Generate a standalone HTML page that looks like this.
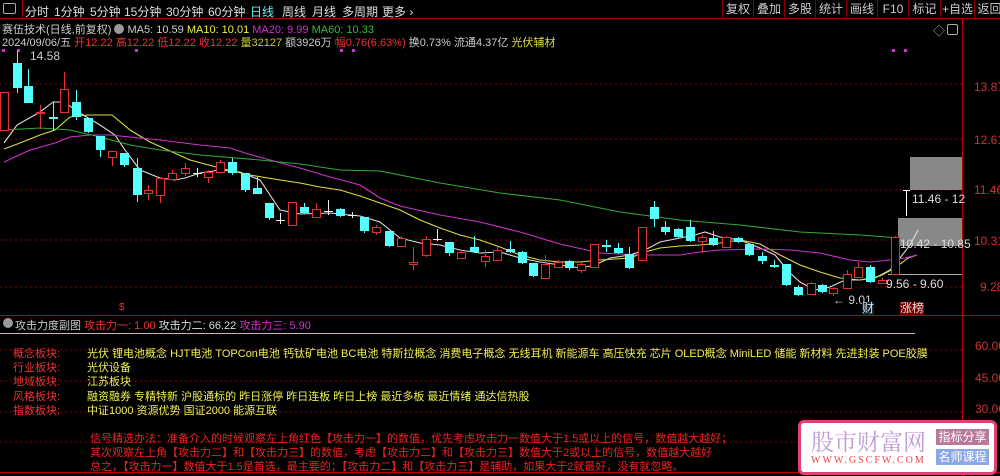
<!DOCTYPE html>
<html><head><meta charset="utf-8"><style>
*{margin:0;padding:0;box-sizing:border-box}
body{width:1000px;height:476px;background:#000;overflow:hidden;position:relative;font-family:"Liberation Sans","Noto Sans CJK SC",sans-serif;font-size:11px;color:#ccc}
.a{position:absolute;white-space:nowrap}
.btn{position:absolute;top:0;height:19px;border-left:1px solid #800;color:#ccc;font-size:12px;line-height:19px;text-align:center}
.tb{position:absolute;top:3px;font-size:12px;color:#ddd}
</style></head><body>
<div class="a" style="left:0;top:0;width:1000px;height:19px;border-bottom:1px solid #a00"></div>
<div class="a" style="left:3px;top:3px;width:13px;height:11px;border:1px solid #aaa;border-radius:2px"></div>
<div class="a" style="left:22px;top:0;height:19px;border-left:1px solid #a00"></div>
<span class="tb" style="left:25px">分时</span>
<span class="tb" style="left:54px">1分钟</span>
<span class="tb" style="left:90px">5分钟</span>
<span class="tb" style="left:124px">15分钟</span>
<span class="tb" style="left:166px">30分钟</span>
<span class="tb" style="left:208px">60分钟</span>
<span class="tb" style="left:250px;color:#6ee">日线</span>
<span class="tb" style="left:282px">周线</span>
<span class="tb" style="left:312px">月线</span>
<span class="tb" style="left:342px">多周期</span>
<span class="tb" style="left:382px">更多 ›</span>
<div class="btn" style="left:722px;width:31px">复权</div>
<div class="btn" style="left:753px;width:31px">叠加</div>
<div class="btn" style="left:784px;width:31px">多股</div>
<div class="btn" style="left:815px;width:31px">统计</div>
<div class="btn" style="left:846px;width:31px">画线</div>
<div class="btn" style="left:877px;width:31px">F10</div>
<div class="btn" style="left:908px;width:32px">标记</div>
<div class="btn" style="left:940px;width:34px">+自选</div>
<div class="btn" style="left:974px;width:30px">返回</div>
<div class="a" style="left:2px;top:21px;font-size:11px;color:#ccc">赛伍技术(日线,前复权) <span style="display:inline-block;width:10px;height:10px;border-radius:5px;background:#999;vertical-align:-1px"></span> MA5: 10.59 <span style="color:#ee4">MA10: 10.01</span> <span style="color:#c3c">MA20: 9.99</span> <span style="color:#3b3">MA60: 10.33</span></div>
<div class="a" style="left:2px;top:34px;font-size:11px;color:#ccc">2024/09/06/五 <span style="color:#e33">开12.22 高12.22 低12.22 收12.22</span> <span style="color:#cc3">量32127</span> 额3926万 <span style="color:#e33">幅0.76(6.63%)</span> 换0.73% 流通4.37亿 <span style="color:#dd4">光伏辅材</span></div>
<div class="a" style="left:933px;top:22px;font-size:12px;color:#aaa">◇</div>
<div class="a" style="left:947px;top:24px;width:11px;height:11px;border:1px solid #aaa;border-radius:2px"></div>

<svg class="a" style="left:0;top:0" width="1000" height="476">
<g stroke="#800" stroke-dasharray="2,3" stroke-width="1">
<line x1="0" y1="84" x2="962" y2="84"/><line x1="0" y1="139" x2="962" y2="139"/><line x1="0" y1="190" x2="962" y2="190"/><line x1="0" y1="240" x2="962" y2="240"/><line x1="0" y1="287" x2="962" y2="287"/>
<line x1="0" y1="350" x2="962" y2="350"/><line x1="0" y1="381" x2="962" y2="381"/><line x1="0" y1="412" x2="962" y2="412"/><line x1="0" y1="442" x2="962" y2="442"/>
</g>
<line x1="962.5" y1="19" x2="962.5" y2="476" stroke="#b00"/>
<line x1="0" y1="315.5" x2="1000" y2="315.5" stroke="#b00"/>
<line x1="0" y1="333.5" x2="915" y2="333.5" stroke="#cc3"/>
<line x1="0" y1="472.5" x2="1000" y2="472.5" stroke="#b00"/>
<g fill="#c3c"><rect x="2" y="49" width="3" height="3"/><rect x="17" y="49" width="3" height="3"/><rect x="135" y="49" width="3" height="3"/><rect x="340" y="49" width="3" height="3"/><rect x="352" y="49" width="3" height="3"/><rect x="892" y="49" width="3" height="3"/><rect x="904" y="49" width="3" height="3"/></g>
<rect x="910" y="157" width="52" height="33" fill="#888"/>
<rect x="898" y="218" width="64" height="28" fill="#888"/>
<line x1="888" y1="274.5" x2="962" y2="274.5" stroke="#aaa"/>
<line x1="906.5" y1="190" x2="906.5" y2="216" stroke="#fff"/><line x1="903" y1="190.5" x2="910" y2="190.5" stroke="#fff"/>
<g id="ma" fill="none" stroke-width="1.1"></g>
<g id="cd"></g>
</svg>
<div class="a" style="left:30px;top:49px;color:#ccc;font-size:12px">14.58</div>
<div class="a" style="left:912px;top:192px;color:#ddd;font-size:12px">11.46 - 12</div>
<div class="a" style="left:900px;top:237px;color:#ddd;font-size:12px">10.42 - 10.85</div>
<div class="a" style="left:886px;top:277px;color:#ddd;font-size:12px">9.56 - 9.60</div>
<div class="a" style="left:833px;top:293px;color:#ccc;font-size:12px">← 9.01</div>
<div class="a" style="left:862px;top:302px;color:#ddd;font-size:12px;background:#123;line-height:13px">财</div>
<div class="a" style="left:900px;top:302px;color:#ddd;font-size:12px;background:#700;line-height:13px">涨榜</div>
<div class="a" style="left:119px;top:302px;color:#e33;font-size:10px">$</div>
<div class="a" style="left:974px;top:80px;color:#c33;font-size:12px">13.87</div>
<div class="a" style="left:974px;top:133px;color:#c33;font-size:12px">12.61</div>
<div class="a" style="left:974px;top:183px;color:#c33;font-size:12px">11.46</div>
<div class="a" style="left:974px;top:234px;color:#c33;font-size:12px">10.31</div>
<div class="a" style="left:980px;top:280px;color:#c33;font-size:12px">9.28</div>
<div class="a" style="left:975px;top:339px;color:#c33;font-size:12px">60.00</div>
<div class="a" style="left:975px;top:371px;color:#c33;font-size:12px">45.00</div>
<div class="a" style="left:975px;top:402px;color:#c33;font-size:12px">30.00</div>
<div class="a" style="left:3px;top:318px;width:10px;height:10px;border-radius:5px;background:#999"></div>
<div class="a" style="left:15px;top:317px;font-size:11px;color:#ccc">攻击力度副图 <span style="color:#e33">攻击力一: 1.00</span> <span style="color:#ddd">攻击力二: 66.22</span> <span style="color:#c3c">攻击力三: 5.90</span></div>
<div class="a" style="left:13px;top:347px;color:#e33;line-height:14.2px;font-size:11px">概念板块:<br>行业板块:<br>地域板块:<br>风格板块:<br>指数板块:</div>
<div class="a" style="left:87px;top:347px;color:#ee5;line-height:14.2px;font-size:11px">光伏 锂电池概念 HJT电池 TOPCon电池 钙钛矿电池 BC电池 特斯拉概念 消费电子概念 无线耳机 新能源车 高压快充 芯片 OLED概念 MiniLED 储能 新材料 先进封装 POE胶膜<br>光伏设备<br>江苏板块<br>融资融券 专精特新 沪股通标的 昨日涨停 昨日连板 昨日上榜 最近多板 最近情绪 通达信热股<br>中证1000 资源优势 国证2000 能源互联</div>
<div class="a" style="left:90px;top:432px;color:#e22;line-height:14px;font-size:11px">信号精选办法：准备介入的时候观察左上角红色【攻击力一】的数值，优先考虑攻击力一数值大于1.5或以上的信号，数值越大越好；<br>其次观察左上角【攻击力二】和【攻击力三】的数值，考虑【攻击力二】和【攻击力三】数值大于2或以上的信号，数值越大越好<br>总之，【攻击力一】数值大于1.5是首选，最主要的；【攻击力二】和【攻击力三】是辅助，如果大于2就最好，没有就忽略。</div>
<div class="a" style="left:798px;top:420px;width:199px;height:55px;background:#fff;border:3px solid #e2407a;border-radius:6px"></div>
<div class="a" style="left:811px;top:424px;font-family:'Noto Serif CJK SC',serif;font-size:23px;color:#c49ad8;letter-spacing:0">股市财富网</div>
<div class="a" style="left:811px;top:455px;font-family:'Liberation Serif',serif;font-size:10px;color:#e44;letter-spacing:2px">WWW.GSCFW.COM</div>
<div class="a" style="left:936px;top:429px;width:53px;height:16px;background:#b87a9a;color:#fff;font-size:12px;text-align:center;line-height:16px">指标分享</div>
<div class="a" style="left:936px;top:449px;width:53px;height:16px;background:#8aa8e8;color:#fff;font-size:12px;text-align:center;line-height:16px">名师课程</div>
<script>
var C=[[4,'r',92,130,92,130],[17,'c',63,88,51,93],[28,'c',86,103,69,103],[40,'r',112,113,105,129],[53,'c',117,118,102,130],[64,'r',89,112,72,112],[76,'c',102,117,90,120],[88,'c',118,132,118,133],[100,'c',136,150,136,157],[112,'r',151,157,151,166],[124,'c',153,165,153,167],[137,'c',168,195,158,202],[148,'r',190,193,185,200],[160,'r',178,195,178,203],[172,'r',173,179,170,180],[185,'r',168,173,163,176],[197,'w',173,174,168,177],[208,'r',172,177,170,183],[220,'r',162,172,160,172],[232,'c',162,173,158,175],[245,'c',173,190,173,192],[257,'c',188,194,177,194],[269,'c',203,218,203,220],[280,'w',220,221,213,224],[292,'r',202,225,202,226],[304,'c',207,213,203,214],[316,'r',209,217,203,218],[328,'w',211,212,200,215],[340,'c',209,216,208,217],[352,'w',215,216,212,218],[364,'c',217,231,217,233],[376,'r',227,232,225,235],[389,'c',231,246,231,247],[401,'r',238,246,236,247],[413,'r',262,264,247,270],[426,'r',239,255,236,257],[437,'w',239,240,229,241],[449,'c',242,253,242,256],[461,'r',252,258,250,259],[474,'c',247,252,236,253],[485,'r',256,261,250,267],[497,'r',250,260,247,261],[510,'c',249,252,241,253],[522,'c',252,263,251,264],[533,'c',263,276,263,277],[545,'r',264,278,255,279],[558,'r',262,267,260,268],[569,'c',261,268,260,270],[581,'r',264,270,262,273],[594,'r',244,267,244,268],[606,'c',245,246,240,252],[618,'c',248,253,243,254],[629,'c',254,268,247,269],[642,'r',227,260,227,261],[654,'c',207,219,201,227],[665,'c',227,232,221,235],[678,'c',229,237,228,238],[690,'c',227,241,220,242],[702,'r',237,241,235,253],[713,'c',238,245,231,246],[726,'r',237,247,236,248],[738,'c',238,242,237,243],[749,'c',244,255,244,256],[762,'c',256,261,252,264],[774,'c',265,267,260,268],[786,'c',264,285,264,286],[798,'c',287,295,285,296],[811,'r',283,294,282,295],[822,'c',285,292,284,293],[833,'r',288,293,287,296],[847,'r',274,288,270,289],[858,'r',267,277,262,278],[870,'c',267,282,265,283],[882,'r',280,283,278,284],[895,'r',237,274,236,275]];
var h='';
C.forEach(function(c){var x=c[0],t=c[1],o=Math.min(c[2],c[3]),cl=Math.max(c[2],c[3]),col=t=='r'?'#d33':(t=='c'?'#5ff':'#eee');
h+='<line x1="'+(x+.5)+'" y1="'+c[4]+'" x2="'+(x+.5)+'" y2="'+c[5]+'" stroke="'+col+'"/>';
if(t=='w'){h+='<line x1="'+(x-4)+'" y1="'+(o+.5)+'" x2="'+(x+5)+'" y2="'+(o+.5)+'" stroke="#eee"/>';}
else if(t=='r'){h+='<rect x="'+(x-3.5)+'" y="'+(o+.5)+'" width="8" height="'+Math.max(1,cl-o)+'" fill="#000" stroke="#d33"/>';}
else{h+='<rect x="'+(x-4)+'" y="'+o+'" width="9" height="'+Math.max(2,cl-o)+'" fill="#5ff"/>';}});
document.getElementById('cd').innerHTML=h;
var M={'#ddd':[[4,143],[17,125],[40,112],[53,102],[64,102],[80,113],[100,125],[115,135],[125,150],[140,170],[160,178],[175,180],[185,178],[200,173],[220,170],[240,172],[260,180],[280,210],[300,214],[330,213],[360,216],[380,222],[400,238],[420,243],[440,245],[460,250],[480,253],[500,252],[520,258],[540,262],[560,265],[580,268],[595,265],[610,258],[630,255],[645,250],[660,242],[680,238],[695,235],[705,232],[720,237],[740,240],[760,248],[775,255],[790,273],[800,282],[815,290],[830,287],[845,280],[860,280],[875,278],[890,270],[900,258],[910,245],[918,230]],
'#dd4':[[4,149],[20,143],[40,135],[55,130],[70,117],[88,115],[112,115],[130,130],[150,142],[170,151],[190,160],[220,168],[250,175],[280,180],[300,183],[320,187],[340,190],[360,196],[380,203],[400,210],[420,220],[440,228],[460,235],[480,240],[500,247],[520,255],[540,260],[560,262],[580,262],[600,260],[630,258],[645,252],[660,248],[680,246],[700,245],[720,243],[740,240],[760,244],[780,255],[800,265],[820,272],[840,278],[860,280],[880,276],[895,268],[908,258],[917,255]],
'#c3c':[[4,162],[30,150],[55,143],[70,137],[90,135],[110,135],[130,137],[160,140],[200,145],[230,148],[245,153],[270,160],[300,168],[330,177],[360,185],[380,198],[400,206],[440,215],[480,222],[520,232],[560,244],[600,253],[640,255],[680,255],[700,252],[720,250],[760,249],[790,250],[820,253],[850,260],[870,262],[890,260],[905,258],[917,255]],
'#3a3':[[4,130],[40,128],[70,130],[100,137],[130,145],[160,150],[200,155],[260,160],[300,164],[340,170],[380,171],[440,183],[500,193],[560,200],[620,212],[680,220],[740,225],[800,232],[860,235],[900,238]]};
var mh='';for(var k in M){mh+='<polyline stroke="'+k+'" points="'+M[k].map(function(p){return p.join(',')}).join(' ')+'"/>';}
document.getElementById('ma').innerHTML=mh;
</script>
</body></html>
